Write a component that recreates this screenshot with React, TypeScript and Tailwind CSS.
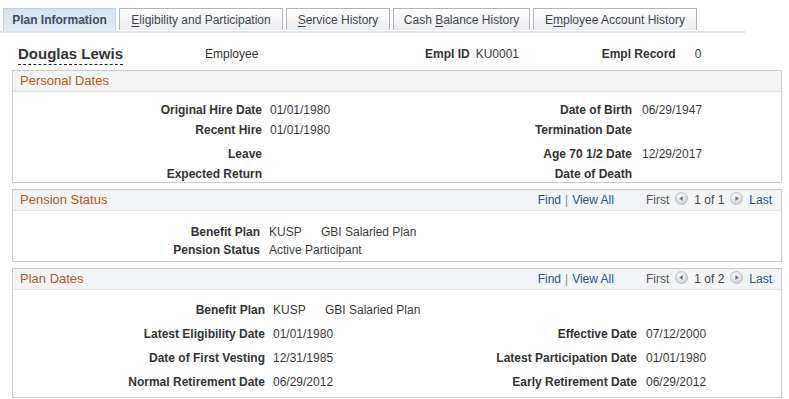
import React from 'react'

const font = { fontFamily: '"Liberation Sans", Arial, sans-serif' }

interface TabDef {
  label: string
  key?: number
  width: string
}

const tabs: TabDef[] = [
  { label: 'Plan Information', width: 'w-[113px]' },
  { label: 'Eligibility and Participation', key: 0, width: 'w-[164px]' },
  { label: 'Service History', key: 0, width: 'w-[104px]' },
  { label: 'Cash Balance History', key: 5, width: 'w-[137px]' },
  { label: 'Employee Account History', key: 1, width: 'w-[164px]' }
]

function TabLabel({ label, k }: { label: string; k?: number }): React.JSX.Element {
  if (k === undefined) return <span>{label}</span>
  return (
    <span className="whitespace-pre">
      {label.slice(0, k)}
      <span className="underline underline-offset-2">{label[k]}</span>
      {label.slice(k + 1)}
    </span>
  )
}

function NavButton({ dir }: { dir: 'left' | 'right' }): React.JSX.Element {
  return (
    <svg width="13" height="13" viewBox="0 0 13 13" className="mx-[6px] -mt-[3px]">
      <defs>
        <radialGradient id={`g-${dir}`} cx="40%" cy="35%" r="70%">
          <stop offset="0%" stopColor="#ffffff" />
          <stop offset="100%" stopColor="#c9ccd0" />
        </radialGradient>
      </defs>
      <circle cx="6.5" cy="6.5" r="6" fill={`url(#g-${dir})`} stroke="#b4b8bd" strokeWidth="0.8" />
      {dir === 'left' ? (
        <path d="M4.2 6.5 L7.6 4 L7.6 9 Z" fill="#6b7076" />
      ) : (
        <path d="M8.8 6.5 L5.4 4 L5.4 9 Z" fill="#6b7076" />
      )}
    </svg>
  )
}

function GridNav({ total }: { total: number }): React.JSX.Element {
  return (
    <div className="flex items-center text-[12px]">
      <span className="text-[#26528f]">Find</span>
      <span className="mx-[4px] text-[#8a8f96]">|</span>
      <span className="text-[#26528f]">View All</span>
      <span className="ml-[32px] text-[#555]">First</span>
      <NavButton dir="left" />
      <span className="text-[#444]">1 of {total}</span>
      <NavButton dir="right" />
      <span className="text-[#26528f]">Last</span>
    </div>
  )
}

function SectionHeader({ title, nav }: { title: string; nav?: React.ReactNode }): React.JSX.Element {
  return (
    <div className="flex h-[21px] items-center justify-between border-b border-[#e2e4e6] bg-[#f2f4f5] pl-[7px] pr-[9px]">
      <span className="text-[13px] text-[#b9571d]">{title}</span>
      {nav}
    </div>
  )
}

function Label({ children, w }: { children?: React.ReactNode; w: string }): React.JSX.Element {
  return <span className={`${w} shrink-0 text-right font-bold text-[#333]`}>{children}</span>
}

function Value({ children, w }: { children?: React.ReactNode; w?: string }): React.JSX.Element {
  return <span className={`${w ?? ''} shrink-0 text-[#3a3a3a]`}>{children}</span>
}

export default function App(): React.JSX.Element {
  return (
    <div style={font} className="h-[399px] w-[789px] overflow-hidden bg-white text-[12px] leading-[14px]">
      {/* tabs */}
      <div className="relative pl-[3px] pt-[8px]">
        <div className="flex gap-[3px]">
          {tabs.map((t, i) =>
            i === 0 ? (
              <div
                key={t.label}
                className={`${t.width} relative z-10 flex h-[23px] items-center justify-center border border-b-0 border-[#c4cfdc] bg-gradient-to-b from-[#d3e1f1] to-[#e3ecf7] font-bold text-[#3f4c5e]`}
              >
                {t.label}
              </div>
            ) : (
              <div
                key={t.label}
                className={`${t.width} flex h-[22px] items-center justify-center border border-b-0 border-[#aeb5bd] bg-gradient-to-b from-[#ffffff] to-[#ececec] text-[#3d4550]`}
              >
                <TabLabel label={t.label} k={t.key} />
              </div>
            )
          )}
        </div>
        <div className="-ml-[3px] h-[2px] w-[745px] bg-[#dae5f2]" />
      </div>

      {/* employee header */}
      <div className="flex h-[37px] items-center pt-[5px]">
        <span className="ml-[18px] w-[187px] text-[15px] font-bold text-[#333]">
          <span className="border-b border-dashed border-[#222] pb-[2px]">Douglas Lewis</span>
        </span>
        <span className="w-[220px] text-[#333]">Employee</span>
        <span className="font-bold text-[#333]">Empl ID</span>
        <span className="ml-[6px] w-[126px] text-[#3a3a3a]">KU0001</span>
        <span className="w-[93px] font-bold text-[#333]">Empl Record</span>
        <span className="text-[#3a3a3a]">0</span>
      </div>

      {/* personal dates */}
      <div className="ml-[12px] w-[770px] border border-[#c9cbcd]">
        <SectionHeader title="Personal Dates" />
        <div className="pb-[1px] pt-[11px]">
          {[
            ['Original Hire Date', '01/01/1980', 'Date of Birth', '06/29/1947', 'h-[20px]'],
            ['Recent Hire', '01/01/1980', 'Termination Date', '', 'h-[24px]'],
            ['Leave', '', 'Age 70 1/2 Date', '12/29/2017', 'h-[20px]'],
            ['Expected Return', '', 'Date of Death', '', 'h-[14px]']
          ].map(([l1, v1, l2, v2, h]) => (
            <div key={l1} className={`flex items-start ${h}`}>
              <Label w="w-[249px]">{l1}</Label>
              <Value w="ml-[8px] w-[150px]">{v1}</Value>
              <Label w="w-[212px]">{l2}</Label>
              <Value w="ml-[10px]">{v2}</Value>
            </div>
          ))}
        </div>
      </div>

      {/* pension status */}
      <div className="ml-[12px] mt-[6px] w-[770px] border border-[#c9cbcd]">
        <SectionHeader title="Pension Status" nav={<GridNav total={1} />} />
        <div className="pb-0 pt-[14px]">
          <div className="flex h-[18px] items-start">
            <Label w="w-[247px]">Benefit Plan</Label>
            <Value w="ml-[9px] w-[52px]">KUSP</Value>
            <Value>GBI Salaried Plan</Value>
          </div>
          <div className="flex h-[18px] items-start">
            <Label w="w-[247px]">Pension Status</Label>
            <Value w="ml-[9px]">Active Participant</Value>
          </div>
        </div>
      </div>

      {/* plan dates */}
      <div className="ml-[12px] mt-[6px] w-[770px] border border-[#c9cbcd]">
        <SectionHeader title="Plan Dates" nav={<GridNav total={2} />} />
        <div className="pb-0 pt-[13px]">
          <div className="flex h-[24px] items-start">
            <Label w="w-[252px]">Benefit Plan</Label>
            <Value w="ml-[8px] w-[52px]">KUSP</Value>
            <Value>GBI Salaried Plan</Value>
          </div>
          {[
            ['Latest Eligibility Date', '01/01/1980', 'Effective Date', '07/12/2000', 'h-[24px]'],
            ['Date of First Vesting', '12/31/1985', 'Latest Participation Date', '01/01/1980', 'h-[24px]'],
            ['Normal Retirement Date', '06/29/2012', 'Early Retirement Date', '06/29/2012', 'h-[22px]']
          ].map(([l1, v1, l2, v2, h]) => (
            <div key={l1} className={`flex items-start ${h}`}>
              <Label w="w-[252px]">{l1}</Label>
              <Value w="ml-[8px] w-[150px]">{v1}</Value>
              <Label w="w-[214px]">{l2}</Label>
              <Value w="ml-[9px]">{v2}</Value>
            </div>
          ))}
        </div>
      </div>
    </div>
  )
}
